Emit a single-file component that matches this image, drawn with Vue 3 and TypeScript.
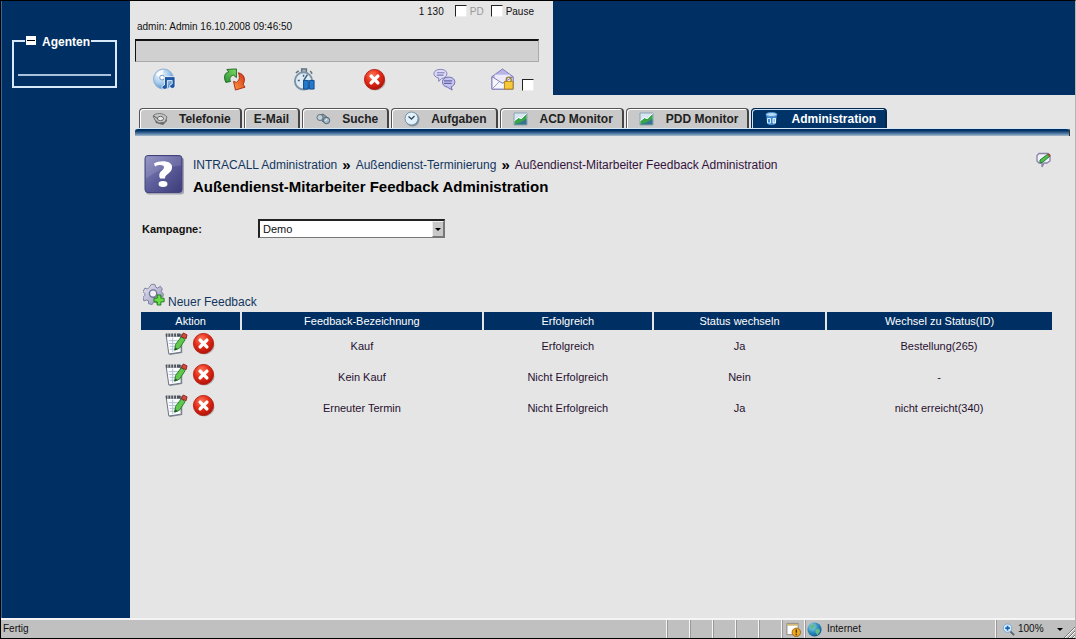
<script setup lang="ts">
import { ref } from 'vue'

interface Tab { label: string; icon?: string }
interface Feedback { name: string; result: string; change: string; target: string }

const tabs: Tab[] = [
  { label: 'Telefonie', icon: 'phone' },
  { label: 'E-Mail' },
  { label: 'Suche', icon: 'search' },
  { label: 'Aufgaben', icon: 'clock' },
  { label: 'ACD Monitor', icon: 'chart' },
  { label: 'PDD Monitor', icon: 'chart' },
  { label: 'Administration', icon: 'admin' },
]
const tools = [
  { id: 'music', label: 'Musik' },
  { id: 'refresh', label: 'Aktualisieren' },
  { id: 'timer', label: 'Pause-Timer' },
  { id: 'delete', label: 'Beenden' },
  { id: 'chat', label: 'Chat' },
]
const columns = ['Aktion', 'Feedback-Bezeichnung', 'Erfolgreich', 'Status wechseln', 'Wechsel zu Status(ID)']
const rows: Feedback[] = [
  { name: 'Kauf', result: 'Erfolgreich', change: 'Ja', target: 'Bestellung(265)' },
  { name: 'Kein Kauf', result: 'Nicht Erfolgreich', change: 'Nein', target: '-' },
  { name: 'Erneuter Termin', result: 'Nicht Erfolgreich', change: 'Ja', target: 'nicht erreicht(340)' },
]
const active = ref('Administration')
const campaign = ref('Demo')
const message = ref('')
</script>

<template>
  <div class="window">
    <svg class="sprite" aria-hidden="true">
      <defs>
        <radialGradient id="gRed" cx=".4" cy=".3" r=".75"><stop offset="0" stop-color="#ff7a5c" /><stop offset=".5" stop-color="#e32c17" /><stop offset="1" stop-color="#a80f08" /></radialGradient>
        <radialGradient id="gBlue" cx=".35" cy=".3" r=".8"><stop offset="0" stop-color="#f4faff" /><stop offset=".5" stop-color="#a9cdee" /><stop offset="1" stop-color="#3f7fbe" /></radialGradient>
        <radialGradient id="gGlobe" cx=".35" cy=".3" r=".8"><stop offset="0" stop-color="#9fe0f0" /><stop offset=".5" stop-color="#2f8fc0" /><stop offset="1" stop-color="#0c4f86" /></radialGradient>
        <linearGradient id="gHelp" x1="0" y1="0" x2="1" y2="1"><stop offset="0" stop-color="#8a8abf" /><stop offset=".5" stop-color="#5c5c9b" /><stop offset="1" stop-color="#3c3c7a" /></linearGradient>
        <linearGradient id="gGear" x1="0" y1="0" x2="1" y2="1"><stop offset="0" stop-color="#e9e9f5" /><stop offset="1" stop-color="#8f8fb3" /></linearGradient>
        <linearGradient id="gGreen" x1="0" y1="1" x2="1" y2="0"><stop offset="0" stop-color="#2c8f35" /><stop offset="1" stop-color="#7ddc62" /></linearGradient>
        <linearGradient id="gOrange" x1="1" y1="0" x2="0" y2="1"><stop offset="0" stop-color="#d22f1b" /><stop offset="1" stop-color="#ff9c3c" /></linearGradient>
      </defs>
      <symbol id="i-music" viewBox="0 0 24 24">
        <circle cx="11" cy="11.500" r="10.500" fill="url(#gBlue)" stroke="#8fb0d0" />
        <path d="M3 7a9 9 0 0 1 8-5l-1 6-3 2z" fill="#fff" opacity=".8" />
        <circle cx="9.500" cy="10" r="2.500" fill="#fff" stroke="#6f93b5" />
        <path d="M12 9h11v10a2.800 2.300 0 1 1-3-2.300V13h-5v7a2.800 2.300 0 1 1-3-2.300z" fill="#1c56a5" stroke="#fff" stroke-width=".8" />
      </symbol>
      <symbol id="i-refresh" viewBox="0 0 24 24">
        <path d="M3 15C0 9 2 5 6 4L4 1.500 14 1v9l-3-2.500C8 8 6 11 8 14z" fill="url(#gGreen)" stroke="#1d6b25" />
        <path d="M16 5c6 1 8 7 5 12l2 3-10 3-2-9 3 1c3-2 4-5 2-10z" fill="url(#gOrange)" stroke="#a92b14" />
      </symbol>
      <symbol id="i-timer" viewBox="0 0 24 24">
        <path d="M9 1h5v4H9zM3 5l3-2M18 3l2 3" fill="#aab5bd" stroke="#62727e" stroke-width="1.500" />
        <circle cx="11" cy="13.500" r="9" fill="#dfeaf2" stroke="#7c93a7" stroke-width="2" />
        <path d="M11 13.500L15 7M5 13h2M11 7v2" stroke="#35617f" stroke-width="1.500" />
        <path d="M11 13h5v9h-5zM17 13h5v9h-5z" fill="#2379cb" stroke="#0e4c91" />
      </symbol>
      <symbol id="i-delete" viewBox="0 0 24 24">
        <ellipse cx="13" cy="14" rx="10.500" ry="9.500" fill="#888" opacity=".5" />
        <circle cx="12" cy="12" r="10.500" fill="url(#gRed)" stroke="#b51d12" />
        <path d="M8.500 8.500l7 7M15.500 8.500l-7 7" stroke="#fff" stroke-width="3.600" stroke-linecap="round" />
      </symbol>
      <symbol id="i-chat" viewBox="0 0 24 24">
        <path d="M8 1.500c9 0 8 9 1 9.500l-3 3v-3.500C-1 9-1 1.500 8 1.500z" fill="#dddcf6" stroke="#7b79b8" />
        <path d="M4 5h8M4 7.500h7" stroke="#7b79b8" stroke-width="1.200" />
        <path d="M16 9.500c9 0 8 9 3 10l1 3.500-5-3c-7-1-7-10.500 1-10.500z" fill="#c5c4ee" stroke="#6c6aae" />
        <path d="M11.500 13.500h8.500M11.500 16h8" stroke="#6664a8" stroke-width="1.200" />
      </symbol>
      <symbol id="i-mail" viewBox="0 0 24 24">
        <path d="M1 9l11-8 11 8v13H1z" fill="#b9b6e6" stroke="#7d7ab8" />
        <path d="M4 7h16v8H4z" fill="#eceafa" />
        <path d="M1 9l11 7 11-7v13H1z" fill="#f5f5fd" stroke="#7d7ab8" /><path d="M1 22l8-8M23 22l-8-8" stroke="#9b99c8" />
        <path d="M16 14v-2a2.500 2.500 0 0 1 5 0v2" fill="none" stroke="#97802b" stroke-width="1.500" />
        <path d="M14 14h9v8h-9z" fill="#f5c93b" stroke="#b38317" />
      </symbol>
      <symbol id="i-phone" viewBox="0 0 16 16">
        <path d="M1 5l3 7 7 2 4-4-1-4z" fill="#666" /><path d="M1 5c2-3 10-4 14 1l-2 5-6 1-4-3z" fill="#c3c7c2" stroke="#777" /><ellipse cx="8.500" cy="7.500" rx="3" ry="2.200" fill="#e8e8e8" stroke="#666" /><path d="M2 5l4 3" stroke="#555" />
      </symbol>
      <symbol id="i-search" viewBox="0 0 16 16">
        <path d="M3 5l5-2 5 4-5 4z" fill="#8b9caa" stroke="#586875" /><circle cx="5" cy="6.500" r="3" fill="#c0d1dc" stroke="#60717e" /><circle cx="11.500" cy="9.500" r="3.200" fill="#a6bccb" stroke="#50616e" /><path d="M10 9.500l2-1" stroke="#fff" />
      </symbol>
      <symbol id="i-clock" viewBox="0 0 16 16">
        <circle cx="8.500" cy="8.500" r="7" fill="#8192a0" /><circle cx="7.500" cy="7.500" r="6.500" fill="#e3f1fa" stroke="#7893a8" /><path d="M4.500 5.500L7.500 8l3-3" fill="none" stroke="#334a5e" stroke-width="1.300" />
      </symbol>
      <symbol id="i-chart" viewBox="0 0 16 16">
        <path d="M1 2h13v12H1z" fill="#d7e7f2" stroke="#8ba2b4" /><path d="M1.500 10l4-3 3 1 5-5v10.500h-12z" fill="#35a548" /><path d="M1.500 13l5-1 7-4v5.500h-12z" fill="#3a6f9a" /><path d="M1.500 9.500l4-3 3 1 5-5" fill="none" stroke="#fff" />
      </symbol>
      <symbol id="i-admin" viewBox="0 0 16 16">
        <path d="M2 3l1 9c1 3 8 3 9 0l1-9z" fill="#3f88cf" /><ellipse cx="7.500" cy="3.500" rx="5.500" ry="2" fill="#b9dcf8" stroke="#4a8fd4" /><path d="M3.500 7.500h3V12h-3z" fill="none" stroke="#d9efff" /><path d="M9 7.500h2.500V12H9z" fill="#8cc2ef" stroke="#e9f6ff" />
      </symbol>
      <symbol id="i-help" viewBox="0 0 40 40">
        <rect x="2" y="3" width="38" height="37" rx="3" fill="#77778f" opacity=".6" /><rect x="1" y="1" width="37" height="37" rx="3" fill="url(#gHelp)" stroke="#43437c" /><path d="M2 2h35v9Q17 12 2 24z" fill="#fff" opacity=".12" />
        <path d="M10 9c6-4 19-3 18 4 0 6-7 6-7 11h-5c-3-7 4-8 4-11 0-3-5-3-9-1z" fill="#fff" /><ellipse cx="19" cy="29.500" rx="4.500" ry="3" fill="#fff" />
      </symbol>
      <symbol id="i-comment" viewBox="0 0 16 16">
        <path d="M3 1.500h9l2 2V9l-3 2H8l-2 4v-4H3L1 9V3.500z" fill="#f2f0fa" stroke="#8983a8" stroke-width="1.300" /><path d="M4 8l8-6 2 2-7 6-3 1z" fill="#53bd52" stroke="#237d33" /><path d="M12 2l2 2" stroke="#a0493c" stroke-width="2" />
      </symbol>
      <symbol id="i-gear" viewBox="0 0 24 24">
        <path d="M9 1h4l1 3 2 1 3-2 2 3-1 3 2 2v3l-3 1-1 3 1 2-3 2-3-2-2 1-1 2-4-1v-3l-2-1-3 1-1-4 2-2v-2L0 9l2-4 3 1 2-2z" fill="url(#gGear)" stroke="#7a7a9c" />
        <circle cx="11" cy="11" r="4" fill="#f1f1f6" stroke="#74749a" stroke-width="1.500" />
        <path d="M15.500 12.500h4v3.500H23v4h-3.500v3.500h-4V20H12v-4h3.500z" fill="#69df45" stroke="#16741a" />
      </symbol>
      <symbol id="i-edit" viewBox="0 0 24 24">
        <path d="M2 3l16-1v20L5 24z" fill="#858a98" /><path d="M1 2h15l1 19-13 2z" fill="#fafbff" stroke="#6a7080" /><path d="M1 2h15v3H1z" fill="#4d535d" /><path d="M3 1v4M6 1v4M9 1v4M12 1v4" stroke="#ddd" />
        <path d="M4 9h10M4 12h9M5 15h8M5 18h8M8 6v15" stroke="#b6bfd3" />
        <path d="M17 5l4 3-6 9-5 2 1-6z" fill="#61c84d" stroke="#247d29" /><path d="M17 5l2-4 4 2-1 4z" fill="#d34a3c" stroke="#8c2820" /><path d="M10 19l1-3 2 2z" fill="#26462b" />
      </symbol>
      <symbol id="i-page" viewBox="0 0 16 16">
        <path d="M1 1.500h12v12H1z" fill="#fff" stroke="#85837c" /><path d="M1 2h12v2H1z" fill="#d1b878" /><circle cx="11" cy="11" r="4.500" fill="#eda923" stroke="#9d6712" /><path d="M11 8v3.500M11 12.500v1.500" stroke="#4f3408" stroke-width="1.500" />
      </symbol>
      <symbol id="i-globe" viewBox="0 0 16 16">
        <circle cx="8" cy="8" r="7.500" fill="url(#gGlobe)" /><path d="M3 4l4-2 2 2-2 3-3 1zM9 8l4-1 1 3-3 4-2-3z" fill="#63b98d" />
      </symbol>
      <symbol id="i-zoom" viewBox="0 0 16 16">
        <path d="M10 10l4 4" stroke="#5a636e" stroke-width="2" /><circle cx="7" cy="6.500" r="4.500" fill="#d7efff" stroke="#7ba4cf" /><path d="M4.500 6.500h5M7 4v5" stroke="#1760b6" stroke-width="1.800" />
      </symbol>
    </svg>

    <div class="body">
      <aside class="sidebar">
        <fieldset class="agents">
          <legend><button class="collapse" type="button" aria-label="Agenten einklappen"></button>Agenten</legend>
          <hr>
        </fieldset>
      </aside>

      <main class="main">
        <header class="top">
          <div class="toolbar">
            <div class="options">
              <span class="count">1 130</span>
              <label class="muted"><input type="checkbox" class="check">PD</label>
              <label><input type="checkbox" class="check">Pause</label>
            </div>
            <div class="session">admin: Admin 16.10.2008 09:46:50</div>
            <input v-model="message" class="message" type="text" aria-label="Meldung">
            <div class="tools">
              <button v-for="t in tools" :key="t.id" class="tool" type="button" :aria-label="t.label">
                <svg><use :href="'#i-' + t.id" /></svg>
              </button>
              <div class="mail">
                <button class="tool" type="button" aria-label="Nachrichten"><svg><use href="#i-mail" /></svg></button>
                <input type="checkbox" class="check" aria-label="Nachrichten sperren">
              </div>
            </div>
          </div>
        </header>

        <nav class="tabs">
          <button v-for="t in tabs" :key="t.label" type="button" class="tab" :class="{ active: t.label === active }" @click="active = t.label">
            <svg v-if="t.icon" class="tab-icon"><use :href="'#i-' + t.icon" /></svg>{{ t.label }}
          </button>
        </nav>
        <div class="bar"></div>

        <section class="content">
          <div class="heading">
            <svg class="help"><use href="#i-help" /></svg>
            <div class="titles">
              <div class="crumbs">
                <a href="#">INTRACALL Administration</a><b>»</b><a href="#">Außendienst-Terminierung</a><b>»</b><span>Außendienst-Mitarbeiter Feedback Administration</span>
              </div>
              <h1>Außendienst-Mitarbeiter Feedback Administration</h1>
            </div>
            <button class="note" type="button" aria-label="Notiz"><svg><use href="#i-comment" /></svg></button>
          </div>

          <div class="campaign">
            <label for="campaign">Kampagne:</label>
            <div class="select">
              <select id="campaign" v-model="campaign"><option>Demo</option></select>
              <span class="arrow"></span>
            </div>
          </div>

          <a href="#" class="new"><svg><use href="#i-gear" /></svg>Neuer Feedback</a>

          <table>
            <colgroup><col class="c1"><col class="c2"><col class="c3"><col class="c4"><col class="c5"></colgroup>
            <thead><tr><th v-for="c in columns" :key="c">{{ c }}</th></tr></thead>
            <tbody>
              <tr v-for="r in rows" :key="r.name">
                <td>
                  <div class="actions">
                    <button type="button" :aria-label="r.name + ' bearbeiten'"><svg><use href="#i-edit" /></svg></button>
                    <button type="button" :aria-label="r.name + ' entfernen'"><svg><use href="#i-delete" /></svg></button>
                  </div>
                </td>
                <td>{{ r.name }}</td><td>{{ r.result }}</td><td>{{ r.change }}</td><td>{{ r.target }}</td>
              </tr>
            </tbody>
          </table>
        </section>
      </main>
    </div>

    <footer class="status">
      <span class="ready">Fertig</span>
      <span v-for="n in 5" :key="n" class="cell"></span>
      <span class="cell"><svg><use href="#i-page" /></svg></span>
      <span class="cell zone"><svg><use href="#i-globe" /></svg>Internet</span>
      <span class="cell zoom"><svg><use href="#i-zoom" /></svg>100%<i class="caret"></i></span>
      <svg class="grip" viewBox="0 0 12 12"><path d="M1 12L12 1M5 12l7-7M9 12l3-3" stroke="#777" /><path d="M2 12L12 2M6 12l6-6M10 12l2-2" stroke="#fff" /></svg>
    </footer>
  </div>
</template>

<style>
body { margin: 0; }
</style>

<style scoped>
* { box-sizing: border-box; }
.window { min-height: 100vh; display: flex; flex-direction: column; background: #e5e5e5; border: 1px solid #000; border-right-color: #b4b4b4; font-family: "Liberation Sans", Arial, sans-serif; font-size: 11px; color: #111; }
.sprite { position: absolute; width: 0; height: 0; }
button { background: none; border: 0; padding: 0; font: inherit; color: inherit; cursor: pointer; }
svg { display: block; }
.body { flex: 1; display: flex; }
.sidebar { width: 129px; background: #003063; padding: 31px 13px 0 10px; border-left: 1px solid #3a6796; }
.agents { margin: 0; padding: 0 4px; height: 56px; border: 2px solid #d8eafa; color: #fff; }
.agents legend { display: flex; align-items: center; gap: 6px; padding: 3px 1px 0; margin-left: 7px; font-weight: bold; font-size: 12px; line-height: 14px; }
.collapse { width: 10px; height: 9px; margin-bottom: 4px; background: linear-gradient(#000, #000) center / 8px 1px no-repeat #fff; }
.agents hr { margin: 25px 0 0; border: 0; border-top: 2px solid #a9c2dc; }
.main { flex: 1; min-width: 0; }
.top { background: #003063; }
.toolbar { width: 423px; height: 94px; background: #e5e5e5; padding: 3px 14px 0 5px; }
.options { display: flex; justify-content: flex-end; align-items: center; height: 14px; padding-right: 5px; font-size: 10px; }
.options label { display: flex; align-items: center; gap: 3px; }
.options .count { margin-right: 11px; }
.options .muted { color: #999; margin-right: 7px; }
.check { appearance: none; flex: none; width: 12px; height: 12px; margin: 0; background: #fff; border: 1px solid #eee; border-top-color: #222; border-left-color: #222; }
.check:checked { background: linear-gradient(#111, #111) center / 6px 6px no-repeat #fff; }
.session { font-size: 10px; line-height: 12px; margin-top: 3px; padding-left: 2px; }
.message { display: block; width: 100%; height: 23px; margin: 6px 0; padding: 0 4px; background: #d0d0d0; border: 1px solid #aaa; border-top: 2px solid #111; border-left-color: #111; }
.tools { display: flex; padding-left: 18px; }
.tool { margin-right: 47px; }
.tool:nth-child(5) { margin-right: 35px; }
.tool svg { width: 23px; height: 23px; }
.mail { display: flex; align-items: flex-end; }
.mail .tool { margin-right: 8px; }
.tabs { display: flex; gap: 2px; align-items: flex-end; padding: 13px 0 0 9px; }
.tab { display: flex; align-items: center; height: 20px; padding: 1px 9px 0; font-size: 12px; font-weight: bold; white-space: nowrap; background: #c9c9c9; border: 1px solid #555; border-right: 2px solid #444; border-bottom: 0; border-radius: 4px 4px 0 0; box-shadow: inset 1px 1px #fff; color: #222; }
.tab.active { background: #003469; color: #fff; border-color: #00284f; box-shadow: inset 1px 1px #cfe4f6; }
.tab-icon { width: 16px; height: 16px; margin: 0 11px 0 3px; }
.bar { height: 8px; margin: 0 5px; background: linear-gradient(#003063 20%, #45709b 60%, #a8bdd0); border-top: 1px solid #d2e8fa; border-right: 1px solid #333; border-radius: 3px 3px 0 0; }
.content { padding: 16px 23px 0 11px; }
.heading { display: flex; align-items: flex-start; }
.help { width: 40px; height: 41px; margin: 2px 0 0 3px; }
.titles { flex: 1; margin-left: 9px; }
.crumbs { display: flex; font-size: 12px; line-height: 14px; margin-top: 6px; white-space: nowrap; }
.crumbs a, .new { color: #12365f; text-decoration: none; }
.crumbs b { font-size: 15px; padding: 0 5px; color: #000; }
.crumbs span { color: #33133c; }
h1 { margin: 6px 0 0; font-size: 15px; line-height: 18px; color: #000; }
.note svg { width: 16px; height: 16px; }
.campaign { display: flex; align-items: center; margin-top: 23px; padding-left: 1px; font-weight: bold; }
.campaign label { width: 116px; }
.select { position: relative; width: 187px; }
select { appearance: none; display: block; width: 100%; height: 19px; padding: 0 3px; border: 1px solid #777; border-top: 2px solid #222; border-left: 2px solid #222; border-radius: 0; background: #fff; font: 11px "Liberation Sans", Arial, sans-serif; color: #111; }
.arrow { position: absolute; right: 1px; top: 2px; bottom: 1px; width: 12px; background: #c8c8c8; border: 1px solid #777; border-top-color: #eee; border-left-color: #eee; pointer-events: none; }
.arrow::after { content: ""; display: block; margin: 6px auto 0; width: 0; border: 3px solid transparent; border-top-color: #000; border-bottom: 0; }
.new { display: flex; width: max-content; align-items: flex-end; gap: 3px; margin-top: 45px; padding-left: 2px; font-size: 12px; line-height: 14px; }
.new svg { width: 22px; height: 23px; margin-bottom: 3px; }
table { width: 100%; table-layout: fixed; border-collapse: collapse; margin-top: 3px; }
.c1 { width: 11%; } .c2 { width: 26.5%; } .c3 { width: 18.7%; } .c4 { width: 19%; } .c5 { width: 24.8%; }
th { height: 18px; padding: 0; background: #003063; color: #fff; font-weight: normal; border-right: 2px solid #e5e5e5; }
th:last-child { border-right: 0; }
td { height: 31px; padding: 0; text-align: center; color: #281030; }
.actions { display: flex; justify-content: center; gap: 4px; padding: 0 2px 4px 0; }
.actions svg { width: 23px; height: 23px; }
.status { display: flex; height: 20px; background: #c0c0c0; border-top: 2px solid #f5f5f5; align-items: stretch; font-size: 10px; line-height: 18px; }
.ready { flex: 1; padding-left: 2px; }
.cell { width: 23px; border-left: 1px solid #f5f5f5; box-shadow: inset 1px 0 #999; display: flex; align-items: center; justify-content: center; }
.cell svg { width: 15px; height: 15px; }
.cell.zone { width: 191px; justify-content: flex-start; gap: 5px; padding-left: 2px; }
.cell.zoom { width: 68px; justify-content: flex-start; gap: 2px; padding-left: 5px; }
.caret { margin-left: 11px; border: 3px solid transparent; border-top-color: #000; border-bottom: 0; }
.grip { width: 12px; height: 12px; align-self: flex-end; }
</style>
